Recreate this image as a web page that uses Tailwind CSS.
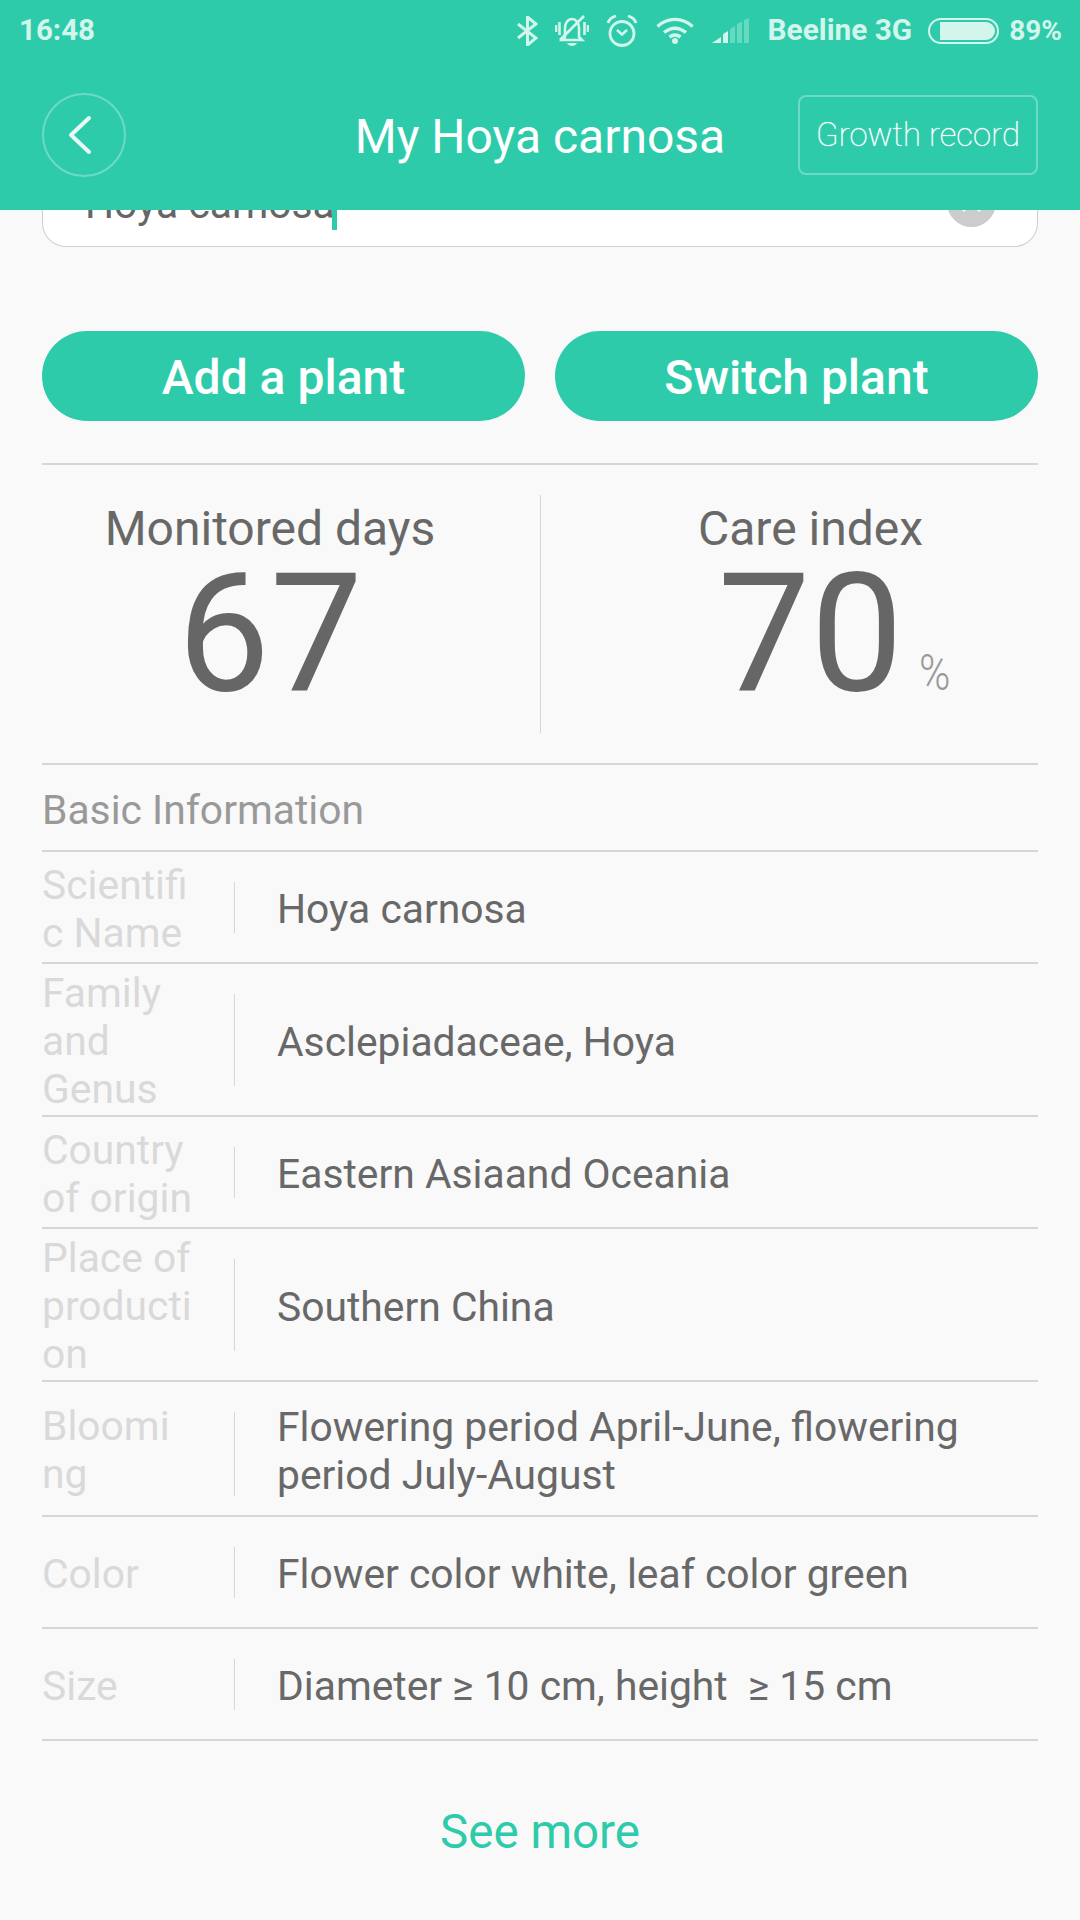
<!doctype html>
<html lang="en">
<head>
    <title>My Hoya carnosa</title>
    <meta charset="UTF-8">
    <meta name="viewport" content="width=device-width, initial-scale=1.0">
    <script src="https://cdn.jsdelivr.net/npm/@tailwindcss/browser@4"></script>
</head>
<body class="bg-[#f9f9f9] font-['Roboto',sans-serif] text-[#686868] w-[1080px] h-[1920px] overflow-hidden">

<!-- Header -->
<header class="relative z-10 bg-[#2ecbaa] h-[210px]">
    <!-- Status bar -->
    <div class="flex items-center justify-between h-[58px] pt-[3px] pl-[19px] pr-[18px] text-[#d2f5ec] text-[29.5px] font-bold">
        <span>16:48</span>
        <div class="flex items-center">
            <!-- bluetooth -->
            <svg class="w-[21px] h-[30px]" viewBox="0 0 21 30" fill="none" stroke="#d2f5ec" stroke-width="3"><path d="M1 8l18 14-8.500 7V1L19 8 1 22"/></svg>
            <!-- muted bell -->
            <svg class="w-[34px] h-[31px] ml-[17px]" viewBox="0 0 34 31" fill="none" stroke="#d2f5ec" stroke-width="2.600"><path d="M10 22v-9c0-5 3-9 7-9s7 4 7 9v9l3 3H7z"/><path d="M1 10v7M4.500 7v13M33 10v7M29.500 7v13"/><path d="M5 25L29 1"/><path d="M12 28h10c-1 2-3 3-5 3s-4-1-5-3z" fill="#d2f5ec" stroke="none"/></svg>
            <!-- alarm -->
            <svg class="w-[32px] h-[32px] ml-[17px]" viewBox="0 0 32 32" fill="none" stroke="#d2f5ec" stroke-width="2.800"><circle cx="16" cy="18.500" r="12"/><path d="M11 15l5 4.500 5-4.500" stroke-width="2.600"/><path d="M2 8c1-3 4-6 8-7M30 8c-1-3-4-6-8-7"/></svg>
            <!-- wifi -->
            <svg class="w-[38px] h-[27px] ml-[18px]" viewBox="0 0 38 27" fill="none" stroke="#d2f5ec" stroke-width="3.400"><path d="M1.500 9.500c10-9.500 25-9.500 35 0M8 15.500c7-5.500 15-5.500 22 0M13.500 20c3.500-2.500 7.500-2.500 11 0"/><circle cx="19" cy="24" r="3" fill="#d2f5ec" stroke="none"/></svg>
            <!-- signal -->
            <svg class="w-[38px] h-[25px] ml-[18px]" viewBox="0 0 38 25" fill="#d2f5ec"><path d="M0 25l9-6v6z"/><path d="M11 16l5-3v12h-5z"/><g opacity=".35"><path d="M18 11l5-3v17h-5z"/><path d="M25 6l5-2.500V25h-5z"/><path d="M32 2l5-2v25h-5z"/></g></svg>
            <span class="ml-[18px] text-[29.800px]">Beeline 3G</span>
            <!-- battery -->
            <div class="ml-[16px] w-[71px] h-[26px] rounded-full border-2 border-[#d2f5ec] py-[2px] pl-[10px] pr-[2px]">
                <div class="h-full bg-[#d2f5ec] rounded-r-full"></div>
            </div>
            <span class="ml-[10px] text-[28px]">89%</span>
        </div>
    </div>
    <!-- Title bar -->
    <div class="relative flex items-center justify-between h-[152px] pt-[1px] px-[42px]">
        <div class="w-[84px] h-[84px] rounded-full border-2 border-white/30 flex items-center justify-center">
            <svg class="w-[26px] h-[40px] mr-[8px]" viewBox="0 0 26 40" fill="none" stroke="#e6faf5" stroke-width="4" stroke-linecap="round" stroke-linejoin="round"><path d="M22 3L4 20l18 17"/></svg>
        </div>
        <h1 class="absolute left-0 right-0 top-[36px] text-center text-white text-[48px] leading-[86px]">My Hoya carnosa</h1>
        <div class="w-[240px] h-[80px] rounded-[8px] border-2 border-white/30 flex items-center justify-center text-white text-[33px] font-thin [text-shadow:0_0_1px_#ffffff]">Growth record</div>
    </div>
</header>

<main class="px-[42px]">
    <!-- Search field, scrolled mostly under the header -->
    <div class="relative h-[37px] bg-white border border-t-0 border-[#cfcfcf] rounded-b-[24px] overflow-hidden">
        <span class="absolute left-[42px] bottom-[20px] text-[40.800px] leading-[44px] text-[#666666]">Hoya carnosa</span>
        <span class="absolute left-[289px] top-0 w-[5px] h-[20px] bg-[#2ecbaa]"></span>
        <span class="absolute right-[41px] top-[-32px] w-[49px] h-[49px] rounded-full bg-[#cccccc]">
            <svg class="w-[49px] h-[49px]" viewBox="0 0 49 49" fill="none" stroke="#ffffff" stroke-width="3"><path d="M16 16l17 17M33 16L16 33"/></svg>
        </span>
    </div>

    <!-- Buttons -->
    <div class="flex gap-[30px] mt-[84px]">
        <div class="flex-1 h-[90px] pt-[4px] rounded-full bg-[#2ecbaa] flex items-center justify-center text-white text-[48px] font-medium">Add a plant</div>
        <div class="flex-1 h-[90px] pt-[4px] rounded-full bg-[#2ecbaa] flex items-center justify-center text-white text-[48px] font-medium">Switch plant</div>
    </div>

    <!-- Stats -->
    <div class="flex items-stretch mt-[42px] border-t-2 border-b-2 border-[#d6d6d6] h-[302px] py-[30px]">
        <div class="w-[499px] border-r border-[#d6d6d6] text-center pr-[42px]">
            <div class="text-[48px] leading-[54px] mt-[7px]">Monitored days</div>
            <div class="text-[165px] leading-[130px] mt-[13px] text-[#666666]">67</div>
        </div>
        <div class="flex-1 text-center pl-[42px]">
            <div class="text-[48px] leading-[54px] mt-[7px]">Care index</div>
            <div class="text-[165px] leading-[130px] mt-[13px] text-[#666666] relative inline-block">70<span class="absolute left-full ml-[16px] bottom-[1px] text-[50px] leading-[50px] font-light text-[#999999] scale-x-[.85] origin-left">%</span></div>
        </div>
    </div>

    <h2 class="h-[87px] pt-[6px] flex items-center border-b-2 border-[#d6d6d6] text-[40.800px] text-[#999999]">Basic Information</h2>

    <!-- Info rows -->
    <dl class="text-[40.800px] leading-[48px]">
        <div class="flex items-center border-b-2 border-[#d6d6d6] h-[112px]">
            <dt class="w-[192px] pr-[41px] pt-[3px] text-[#d9d9d9] break-all">Scientific Name</dt>
            <span class="w-px h-[51px] bg-[#d6d6d6]"></span>
            <dd class="flex-1 pl-[42px] pt-[4px]">Hoya carnosa</dd>
        </div>
        <div class="flex items-center border-b-2 border-[#d6d6d6] h-[153px]">
            <dt class="w-[192px] pr-[41px] pt-[3px] text-[#d9d9d9] break-words">Family and Genus</dt>
            <span class="w-px h-[92px] bg-[#d6d6d6]"></span>
            <dd class="flex-1 pl-[42px] pt-[4px]">Asclepiadaceae, Hoya</dd>
        </div>
        <div class="flex items-center border-b-2 border-[#d6d6d6] h-[112px]">
            <dt class="w-[192px] pr-[41px] pt-[3px] text-[#d9d9d9] break-words">Country of origin</dt>
            <span class="w-px h-[51px] bg-[#d6d6d6]"></span>
            <dd class="flex-1 pl-[42px] pt-[4px]">Eastern Asiaand Oceania</dd>
        </div>
        <div class="flex items-center border-b-2 border-[#d6d6d6] h-[153px]">
            <dt class="w-[192px] pr-[41px] pt-[3px] text-[#d9d9d9] break-words">Place of production</dt>
            <span class="w-px h-[92px] bg-[#d6d6d6]"></span>
            <dd class="flex-1 pl-[42px] pt-[4px]">Southern China</dd>
        </div>
        <div class="flex items-center border-b-2 border-[#d6d6d6] h-[135px]">
            <dt class="w-[192px] pr-[41px] pt-[3px] text-[#d9d9d9]">Bloomi<br>ng</dt>
            <span class="w-px h-[84px] mt-[10px] bg-[#d6d6d6]"></span>
            <dd class="flex-1 pl-[42px] pt-[4px]">Flowering period April-June, flowering period July-August</dd>
        </div>
        <div class="flex items-center border-b-2 border-[#d6d6d6] h-[112px]">
            <dt class="w-[192px] pr-[41px] pt-[3px] text-[#d9d9d9]">Color</dt>
            <span class="w-px h-[51px] bg-[#d6d6d6]"></span>
            <dd class="flex-1 pl-[42px] pt-[4px]">Flower color white, leaf color green</dd>
        </div>
        <div class="flex items-center border-b-2 border-[#d6d6d6] h-[112px]">
            <dt class="w-[192px] pr-[41px] pt-[3px] text-[#d9d9d9]">Size</dt>
            <span class="w-px h-[51px] bg-[#d6d6d6]"></span>
            <dd class="flex-1 pl-[42px] pt-[4px] whitespace-pre">Diameter ≥ 10 cm, height  ≥ 15 cm</dd>
        </div>
    </dl>

    <div class="text-center text-[#2ecbaa] text-[47.500px] mt-[56px]">See more</div>
</main>
</body>
</html>
